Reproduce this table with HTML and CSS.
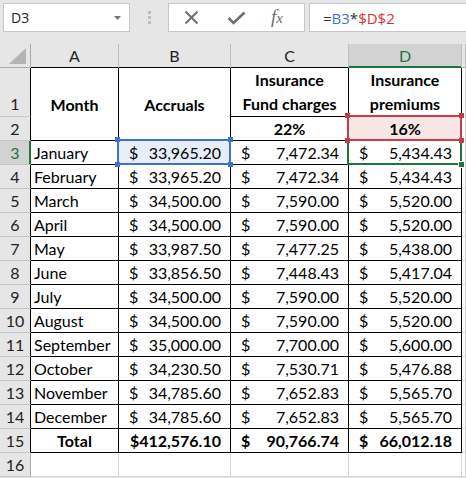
FILE: index.html
```html
<!DOCTYPE html>
<html>
<head>
<meta charset="utf-8">
<link rel="stylesheet" href="styles.css">
</head>
<body>
<div class="app">
  <div class="bar">
    <div class="namebox"><span class="name">D3</span><svg class="caret" width="7" height="4" viewBox="0 0 7 4"><path d="M0 0H7L3.5 4Z" fill="#777"/></svg></div>
    <div class="grip"><i></i><i></i><i></i></div>
    <div class="btns">
      <svg class="ico" width="15" height="15" viewBox="0 0 15 15"><path d="M1.5 1.5L13.5 13.5M13.5 1.5L1.5 13.5" stroke="#6e6e6e" stroke-width="2"/></svg>
      <svg class="ico" width="19" height="14" viewBox="0 0 19 14"><path d="M1.5 7L6.5 12L17.5 1.5" stroke="#6e6e6e" stroke-width="2.6" fill="none"/></svg>
      <span class="fx"><i>f</i><i class="x">x</i></span>
    </div>
    <div class="formula"><span>=</span><span class="rb">B3</span><span>*</span><span class="rr">$D$2</span></div>
  </div>
  <div class="grid">
    <div class="corner"><svg width="17" height="16" viewBox="0 0 17 16"><path d="M17 0V16H0Z" fill="#b4b4b4"/></svg></div>
    <div class="ch tb">A</div>
    <div class="ch tb">B</div>
    <div class="ch tb">C</div>
    <div class="ch tb act">D</div>
    <div class="ch"></div>

    <div class="rh tr r1">1</div>
    <div class="c t b m2 hd">Month</div>
    <div class="c t b m2 hd">Accruals</div>
    <div class="c t b wrap">Insurance<br>Fund charges</div>
    <div class="c t b wrap">Insurance<br>premiums</div>
    <div class="c r1e"></div>

    <div class="rh tr">2</div>
    <div class="c t b ctr">22%</div>
    <div class="c t b ctr pink"><span class="sel red"><i class="tl"></i><i class="trr"></i><i class="bl"></i><i class="br"></i></span>16%</div>
    <div class="c"></div>

    <div class="rh tr act">3</div>
    <div class="c t txt">January</div>
    <div class="c t acc blue"><span class="sel blu"><i class="tl"></i><i class="trr"></i><i class="bl"></i><i class="br"></i></span><span>$</span><span>33,965.20</span></div>
    <div class="c t acc"><span>$</span><span>7,472.34</span></div>
    <div class="c t acc"><span class="sel grn"><i class="fill"></i></span><span>$</span><span>5,434.43</span></div>
    <div class="c"></div>

    <div class="rh tr">4</div>
    <div class="c t txt">February</div>
    <div class="c t acc"><span>$</span><span>33,965.20</span></div>
    <div class="c t acc"><span>$</span><span>7,472.34</span></div>
    <div class="c t acc"><span>$</span><span>5,434.43</span></div>
    <div class="c"></div>

    <div class="rh tr">5</div>
    <div class="c t txt">March</div>
    <div class="c t acc"><span>$</span><span>34,500.00</span></div>
    <div class="c t acc"><span>$</span><span>7,590.00</span></div>
    <div class="c t acc"><span>$</span><span>5,520.00</span></div>
    <div class="c"></div>

    <div class="rh tr">6</div>
    <div class="c t txt">April</div>
    <div class="c t acc"><span>$</span><span>34,500.00</span></div>
    <div class="c t acc"><span>$</span><span>7,590.00</span></div>
    <div class="c t acc"><span>$</span><span>5,520.00</span></div>
    <div class="c"></div>

    <div class="rh tr">7</div>
    <div class="c t txt">May</div>
    <div class="c t acc"><span>$</span><span>33,987.50</span></div>
    <div class="c t acc"><span>$</span><span>7,477.25</span></div>
    <div class="c t acc"><span>$</span><span>5,438.00</span></div>
    <div class="c"></div>

    <div class="rh tr">8</div>
    <div class="c t txt">June</div>
    <div class="c t acc"><span>$</span><span>33,856.50</span></div>
    <div class="c t acc"><span>$</span><span>7,448.43</span></div>
    <div class="c t acc"><span>$</span><span>5,417.04</span></div>
    <div class="c"></div>

    <div class="rh tr">9</div>
    <div class="c t txt">July</div>
    <div class="c t acc"><span>$</span><span>34,500.00</span></div>
    <div class="c t acc"><span>$</span><span>7,590.00</span></div>
    <div class="c t acc"><span>$</span><span>5,520.00</span></div>
    <div class="c"></div>

    <div class="rh tr">10</div>
    <div class="c t txt">August</div>
    <div class="c t acc"><span>$</span><span>34,500.00</span></div>
    <div class="c t acc"><span>$</span><span>7,590.00</span></div>
    <div class="c t acc"><span>$</span><span>5,520.00</span></div>
    <div class="c"></div>

    <div class="rh tr">11</div>
    <div class="c t txt">September</div>
    <div class="c t acc"><span>$</span><span>35,000.00</span></div>
    <div class="c t acc"><span>$</span><span>7,700.00</span></div>
    <div class="c t acc"><span>$</span><span>5,600.00</span></div>
    <div class="c"></div>

    <div class="rh tr">12</div>
    <div class="c t txt">October</div>
    <div class="c t acc"><span>$</span><span>34,230.50</span></div>
    <div class="c t acc"><span>$</span><span>7,530.71</span></div>
    <div class="c t acc"><span>$</span><span>5,476.88</span></div>
    <div class="c"></div>

    <div class="rh tr">13</div>
    <div class="c t txt">November</div>
    <div class="c t acc"><span>$</span><span>34,785.60</span></div>
    <div class="c t acc"><span>$</span><span>7,652.83</span></div>
    <div class="c t acc"><span>$</span><span>5,565.70</span></div>
    <div class="c"></div>

    <div class="rh tr">14</div>
    <div class="c t txt">December</div>
    <div class="c t acc"><span>$</span><span>34,785.60</span></div>
    <div class="c t acc"><span>$</span><span>7,652.83</span></div>
    <div class="c t acc"><span>$</span><span>5,565.70</span></div>
    <div class="c"></div>

    <div class="rh tr">15</div>
    <div class="c t ctr b">Total</div>
    <div class="c t rgt b">$412,576.10</div>
    <div class="c t acc b"><span>$</span><span>90,766.74</span></div>
    <div class="c t acc b"><span>$</span><span>66,012.18</span></div>
    <div class="c"></div>

    <div class="rh">16</div>
    <div class="c"></div>
    <div class="c"></div>
    <div class="c"></div>
    <div class="c"></div>
    <div class="c"></div>
  </div>
</div>
</body>
</html>
```

FILE: styles.css
```css
* { box-sizing: border-box; }
html, body { margin: 0; padding: 0; }
body { background: #e6e6e6; overflow: hidden; }
.app { width: 466px; height: 478px; }

.bar {
  height: 44px;
  display: flex;
  align-items: flex-start;
  padding-top: 3px;
  background: #e6e6e6;
}
.namebox {
  margin-left: 3px;
  width: 127px;
  height: 29px;
  background: #fff;
  border: 1px solid #c6c6c6;
  display: flex;
  align-items: center;
  justify-content: space-between;
  padding: 0 8px 0 7px;
  font-family: "Open Sans", sans-serif;
  font-size: 14px;
  color: #222;
}
.caret { margin-top: 1px; }
.grip {
  width: 38px;
  height: 29px;
  display: flex;
  flex-direction: column;
  align-items: center;
  justify-content: center;
  gap: 2px;
}
.grip i { display: block; width: 3px; height: 3px; background: #bcbcbc; }
.btns {
  width: 137px;
  height: 29px;
  background: #fff;
  border: 1px solid #c6c6c6;
  display: flex;
  align-items: center;
  padding-left: 15px;
}
.btns .ico:first-child { margin-right: 28px; }
.btns .ico:nth-child(2) { margin-right: 25px; margin-top: 1px; }
.fx {
  font-family: "Liberation Serif", serif;
  font-style: italic;
  color: #6e6e6e;
  font-size: 19px;
  line-height: 1;
  margin-top: -2px;
}
.fx i { font-style: italic; }
.fx .x { font-size: 15px; margin-left: 0px; }
.formula {
  margin-left: 4px;
  flex: 1;
  height: 29px;
  background: #fff;
  border: 1px solid #c6c6c6;
  border-right: none;
  display: flex;
  align-items: center;
  padding-left: 13px;
  font-family: "Open Sans", sans-serif;
  font-size: 15px;
  color: #333;
}
.formula .rb { color: #3a73d6; }
.formula .rr { color: #d13438; }

.grid {
  display: grid;
  grid-template-columns: 31px 88px 112px 118px 113px 1fr;
  grid-template-rows: 24px 49px repeat(15, 24px);
  background: #fff;
  font-family: Lato, "Open Sans", sans-serif;
  font-size: 16px;
  color: #000;
}
.grid > div {
  border-right: 1px solid #d4d4d4;
  border-bottom: 1px solid #d4d4d4;
  line-height: 23px;
  white-space: nowrap;
}
.corner {
  background: #e6e6e6;
  border-right-color: #ababab !important;
  border-bottom-color: #ababab !important;
  display: flex;
  align-items: flex-end;
  justify-content: flex-end;
  padding: 0 4px 3px 0;
}
.corner svg { display: block; }
.ch {
  background: #e6e6e6;
  text-align: center;
  color: #222;
  border-right-color: #bdbdbd !important;
  border-bottom-color: #ababab !important;
}
.ch.tb { border-bottom-color: #000 !important; }
.ch.act {
  background: #d2d2d2;
  color: #217346;
  border-bottom-color: #217346 !important;
  box-shadow: inset 0 -1px 0 #217346;
}
.rh {
  background: #e6e6e6;
  text-align: center;
  color: #222;
  border-right-color: #ababab !important;
  border-bottom-color: #c6c6c6 !important;
}
.rh.tr { border-right-color: #000 !important; }
.rh.r1 { line-height: 72px !important; }
.rh.act {
  background: #d2d2d2;
  color: #217346;
  border-right-color: #217346 !important;
  box-shadow: inset -1px 0 0 #217346;
}
.grid > .t { border-right-color: #000; border-bottom-color: #000; }
.c { position: relative; }
.b { font-weight: 700; }
.m2 { grid-row: span 2; display: flex; align-items: center; justify-content: center; }
.wrap { text-align: center; line-height: 24px !important; white-space: normal; }
.ctr { text-align: center; }
.rgt { text-align: right; padding-right: 9px; }
.txt { padding-left: 3px; }
.acc { display: flex; justify-content: space-between; padding: 0 9px 0 10px; }
.pink { background: #fae5e5; }
.blue { background: #e8eef9; }

.sel {
  position: absolute;
  top: -2px; left: -2px; right: -1px; bottom: -1px;
  border: 2px solid;
  pointer-events: none;
}
.sel i { position: absolute; width: 5px; height: 5px; display: block; }
.sel .tl { top: -4px; left: -4px; }
.sel .trr { top: -4px; right: -4px; }
.sel .bl { bottom: -4px; left: -4px; }
.sel .br { bottom: -4px; right: -4px; }
.blu { border-color: #3f72cc; z-index: 2; }
.blu i { background: #3f72cc; }
.red { border-color: #c43d44; z-index: 3; }
.red i { background: #c43d44; }
.grn { border-color: #217346; z-index: 2; }
.grn .fill {
  width: 7px; height: 7px;
  right: -5px; bottom: -5px;
  background: #217346;
  border: 1px solid #fff;
}
```
